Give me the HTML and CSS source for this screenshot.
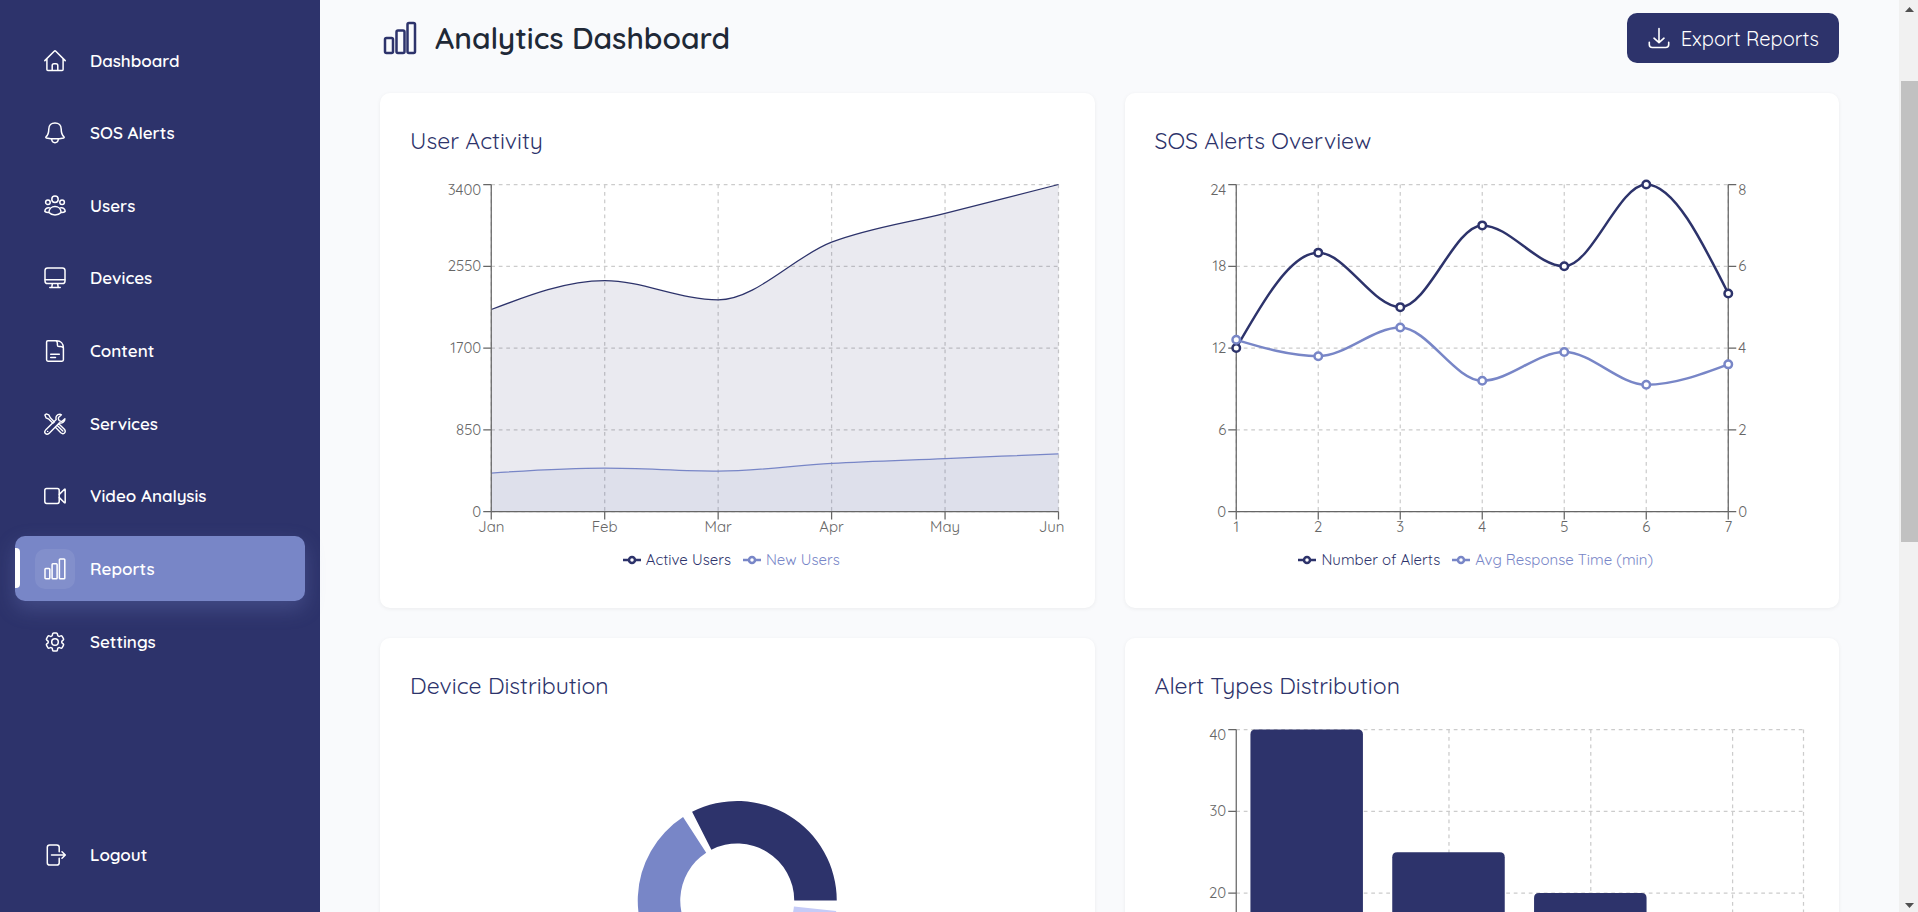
FILE: index.html
```html
<!DOCTYPE html>
<html lang="en">
<head>
<meta charset="utf-8">
<meta name="viewport" content="width=device-width, initial-scale=1">
<title>Analytics Dashboard</title>
<link rel="stylesheet" href="styles.css">
</head>
<body>
<div class="app">
  <aside class="sidebar">
    <nav class="nav" aria-label="Main">
      <a class="nav-item" href="#dashboard"><span class="nav-icon"><svg class="icon" viewBox="0 0 22 22"><path d="M.8 10.6 10.2 1.3q.8-.8 1.6 0l9.4 9.3M2.9 8.8v10.7q0 1 1 1h14.2q1 0 1-1V8.8M8.2 20.3v-4.8q0-1.8 1.8-1.8h2q1.8 0 1.8 1.8v4.8"/></svg></span>Dashboard</a>
      <a class="nav-item" href="#sos"><span class="nav-icon"><svg class="icon" viewBox="0 0 22 22"><path d="M11 .9c3.7 0 6.2 2.6 6.2 6 0 4 1 6.3 2.8 8 .4.5.2.9-.3 1-5.6 1.2-11.8 1.2-17.4 0-.5-.1-.7-.5-.3-1 1.800-1.700 2.800-4 2.800-8 0-3.400 2.500-6 6.200-6zM7.600 16.800c.2 2.300 1.600 3.900 3.400 3.900s3.200-1.600 3.400-3.900"/></svg></span>SOS Alerts</a>
      <a class="nav-item" href="#users"><span class="nav-icon"><svg class="icon" viewBox="0 0 22 22"><circle cx="11" cy="4.300" r="3.200"/><circle cx="3.900" cy="7.200" r="2.300"/><circle cx="18.100" cy="7.200" r="2.300"/><path d="M4.900 17.600c.1-3.600 2.600-6.200 6.100-6.200s6 2.600 6.100 6.200c-1.600 1.700-3.700 2.400-6.100 2.400s-4.500-.7-6.100-2.400zM5.700 12.900c-2.600-.7-4.700.7-4.900 3.500 1 .9 2.300 1.200 4 1.100M16.300 12.900c2.600-.7 4.700.7 4.900 3.500-1 .9-2.300 1.200-4 1.100"/></svg></span>Users</a>
      <a class="nav-item" href="#devices"><span class="nav-icon"><svg class="icon" viewBox="0 0 22 22"><rect x="1" y="1" width="20" height="15.500" rx="2.600"/><path d="M1.200 12.700h19.600M8.300 16.700l-.5 3.800M13.700 16.700l.5 3.800M5.800 20.600h10.400"/></svg></span>Devices</a>
      <a class="nav-item" href="#content"><span class="nav-icon"><svg class="icon" viewBox="0 0 22 22"><path d="M3.800.8h8.700c4.300 0 6.900 3 6.900 7.200v11.800q0 1.400-1.400 1.400H4q-1.400 0-1.400-1.400V2q0-1.200 1.200-1.200zM12 .9q1.500.8 1.400 2.800v1.200q0 1.600 1.600 1.600h1.500q2 0 2.800 1.500M6.700 14.300h8.600M6.700 17.500h4.800"/></svg></span>Content</a>
      <a class="nav-item" href="#services"><span class="nav-icon"><svg class="icon icon-fine" viewBox="0 0 22 22"><path d="M15.900 1.100c-3 .1-4.600 2.800-3.700 5.400L1.600 17.100c-2.300 2.700.8 5.400 3.400 3.300L15.500 9.800c2.700.9 5.500-1 5.400-4.100l-2.800 2.600q-1.700.3-2.900-.8-1.100-1.200-.7-2.900l2.900-2.800zM.9 2.100 2.200.9l2.600 1 1.500 2.900 4.100 4.100M.9 2.100 2 4.800l2.900 1.400 4.100 4.100M11.200 14l5.600 5.700c2.700 2.400 5.800-.7 3.600-3.500l-5.700-5.500M13.500 12.800l5.300 5.300M3.600 18.400h.1"/></svg></span>Services</a>
      <a class="nav-item" href="#video"><span class="nav-icon"><svg class="icon" viewBox="0 0 22 22"><rect x=".8" y="3.600" width="14.400" height="14.800" rx="1.800"/><path d="m15.300 9.400 5.200-5.100q.7-.5.700.4v12.600q0 .9-.7.400l-5.200-5.100"/></svg></span>Video Analysis</a>
      <a class="nav-item nav-item-active" href="#reports" aria-current="page"><span class="nav-icon"><svg class="icon" viewBox="0 0 22 22"><rect x="1" y="10.500" width="4.800" height="10.300" rx=".8"/><rect x="8.100" y="5.800" width="5" height="15" rx=".8"/><rect x="15.400" y="1" width="5.400" height="19.800" rx=".8"/></svg></span>Reports</a>
      <a class="nav-item" href="#settings"><span class="nav-icon"><svg class="icon" viewBox="1 1 22 22"><path d="M9.594 3.940c.09-.542.56-.94 1.110-.94h2.593c.55 0 1.020.398 1.110.94l.213 1.281c.063.374.313.686.645.87.074.04.147.083.22.127.325.196.72.257 1.075.124l1.217-.456a1.125 1.125 0 0 1 1.370.49l1.296 2.247a1.125 1.125 0 0 1-.26 1.431l-1.003.827c-.293.241-.438.613-.43.992a7.723 7.723 0 0 1 0 .255c-.008.378.137.75.43.991l1.004.827c.424.35.534.955.26 1.430l-1.298 2.247a1.125 1.125 0 0 1-1.369.491l-1.217-.456c-.355-.133-.75-.072-1.076.124a6.470 6.470 0 0 1-.22.128c-.331.183-.581.495-.644.869l-.213 1.281c-.09.543-.56.94-1.110.94h-2.594c-.55 0-1.019-.398-1.110-.94l-.213-1.281c-.062-.374-.312-.686-.644-.87a6.520 6.520 0 0 1-.22-.127c-.325-.196-.72-.257-1.076-.124l-1.217.456a1.125 1.125 0 0 1-1.369-.49l-1.297-2.247a1.125 1.125 0 0 1 .26-1.431l1.004-.827c.292-.24.437-.613.43-.991a6.932 6.932 0 0 1 0-.255c.007-.38-.138-.751-.43-.992l-1.004-.827a1.125 1.125 0 0 1-.26-1.430l1.297-2.247a1.125 1.125 0 0 1 1.370-.491l1.216.456c.356.133.751.072 1.076-.124.072-.044.146-.086.22-.128.332-.183.582-.495.644-.869l.214-1.280z"/><circle cx="12" cy="12" r="3.300"/></svg></span>Settings</a>
    </nav>
    <button class="nav-item logout" type="button"><span class="nav-icon"><svg class="icon" viewBox="0 0 22 22"><path d="M15.200 7.700V3.300q0-2.400-2.400-2.400H5.700q-2.400 0-2.400 2.400v15.400q0 2.400 2.400 2.400h7.100q2.400 0 2.400-2.400v-4.400M7.500 11h13.700M18 7.800l3.300 3.200-3.300 3.200"/></svg></span>Logout</button>
  </aside>

  <main class="main">
    <header class="page-header">
      <div class="page-title">
        <svg class="title-icon" viewBox="0 0 40 40"><rect x="5" y="20" width="8" height="15" rx="1.500"/><rect x="16.500" y="12.500" width="8" height="22.500" rx="1.500"/><rect x="27.500" y="5" width="7.500" height="30" rx="1.500"/></svg>
        <h1>Analytics Dashboard</h1>
      </div>
      <button class="export" type="button">
        <svg class="export-icon" viewBox="0 0 24 24"><path d="M12 2.500v14M7 12.200l5 4.500 5-4.500M2.300 16.200v2.300q0 3 3 3h13.400q3 0 3-3v-2.300"/></svg>
        Export Reports
      </button>
    </header>

    <div class="cards">
      <section class="card">
        <h2>User Activity</h2>
        <div class="chart">
          <svg class="plot" id="activity" role="img" aria-label="User activity by month"></svg>
          <ul class="legend">
            <li class="legend-item navy"><svg class="legend-mark" viewBox="0 0 18 10"><path d="M0 5h6M12 5h6"/><circle cx="9" cy="5" r="3"/></svg>Active Users</li>
            <li class="legend-item blue"><svg class="legend-mark" viewBox="0 0 18 10"><path d="M0 5h6M12 5h6"/><circle cx="9" cy="5" r="3"/></svg>New Users</li>
          </ul>
        </div>
      </section>
      <section class="card">
        <h2>SOS Alerts Overview</h2>
        <div class="chart">
          <svg class="plot" id="alerts" role="img" aria-label="SOS alerts and response time"></svg>
          <ul class="legend">
            <li class="legend-item navy"><svg class="legend-mark" viewBox="0 0 18 10"><path d="M0 5h6M12 5h6"/><circle cx="9" cy="5" r="3"/></svg>Number of Alerts</li>
            <li class="legend-item blue"><svg class="legend-mark" viewBox="0 0 18 10"><path d="M0 5h6M12 5h6"/><circle cx="9" cy="5" r="3"/></svg>Avg Response Time (min)</li>
          </ul>
        </div>
      </section>
      <section class="card">
        <h2>Device Distribution</h2>
        <div class="chart"><svg class="plot" id="devices-chart" role="img" aria-label="Device distribution"></svg></div>
      </section>
      <section class="card">
        <h2>Alert Types Distribution</h2>
        <div class="chart"><svg class="plot" id="types" role="img" aria-label="Alert types distribution"></svg></div>
      </section>
    </div>
  </main>

  <div class="scrollbar" aria-hidden="true">
    <svg class="scroll-arrow" viewBox="0 0 19 19"><path d="M6 12h9L10.500 7z"/></svg>
    <div class="scroll-track"><div class="scroll-thumb"></div></div>
    <svg class="scroll-arrow" viewBox="0 0 19 19"><path d="M6 10h9l-4.500 5z"/></svg>
  </div>
</div>
<script src="charts.js"></script>
</body>
</html>
```

FILE: styles.css
```css
* { box-sizing: border-box; }

body {
  margin: 0;
  font-family: "Quicksand", "Lato", sans-serif;
  background: #f9fafc;
  color: #1f2937;
}

.app {
  display: flex;
  height: 100vh;
  overflow: hidden;
}

/* Sidebar */
.sidebar {
  flex: 0 0 320px;
  display: flex;
  flex-direction: column;
  justify-content: space-between;
  padding: 28px 15px 25px;
  background: #2d336b;
}

.nav {
  display: flex;
  flex-direction: column;
  justify-content: space-between;
  min-height: 646px;
}

.nav-item {
  position: relative;
  display: flex;
  align-items: center;
  gap: 15px;
  width: 100%;
  height: 65px;
  padding: 0 20px;
  border: 0;
  border-radius: 10px;
  background: none;
  color: #fff;
  font-family: inherit;
  font-size: 17px;
  font-weight: 600;
  line-height: 24px;
  text-align: left;
  text-decoration: none;
  cursor: pointer;
}

.nav-icon {
  display: flex;
  align-items: center;
  justify-content: center;
  width: 40px;
  height: 40px;
  border-radius: 10px;
}

.icon {
  width: 22px;
  height: 22px;
  fill: none;
  stroke: currentColor;
  stroke-width: 1.5;
  stroke-linecap: round;
  stroke-linejoin: round;
}

.icon-fine { stroke-width: 1.4; }

.nav-item-active {
  background: #7886c7;
  box-shadow: 0 8px 20px rgba(120, 134, 199, 0.3);
}

.nav-item-active .nav-icon { background: rgba(255, 255, 255, 0.08); }

.nav-item-active::before {
  content: "";
  position: absolute;
  left: 0;
  top: 12px;
  width: 5px;
  height: 40px;
  border-radius: 0 4px 4px 0;
  background: #fff;
}

/* Page */
.main {
  flex: 1;
  min-width: 0;
  overflow: hidden;
  padding: 13px 60px 60px;
}

.page-header {
  display: flex;
  align-items: center;
  justify-content: space-between;
  margin-bottom: 30px;
}

.page-title {
  display: flex;
  align-items: center;
  gap: 15px;
}

.title-icon {
  width: 40px;
  height: 40px;
  fill: none;
  stroke: #2d336b;
  stroke-width: 2.5;
}

h1 {
  margin: 0;
  font-size: 30px;
  font-weight: 600;
  line-height: 40px;
}

.export {
  display: flex;
  align-items: center;
  gap: 10px;
  height: 50px;
  padding: 0 20px;
  border: 0;
  border-radius: 10px;
  background: #2d336b;
  color: #fff;
  font-family: inherit;
  font-size: 20px;
  font-weight: 400;
  cursor: pointer;
}

.export-icon {
  width: 24px;
  height: 24px;
  fill: none;
  stroke: currentColor;
  stroke-width: 1.6;
  stroke-linecap: round;
  stroke-linejoin: round;
}

.cards {
  display: grid;
  grid-template-columns: repeat(2, minmax(0, 1fr));
  gap: 30px;
}

.card {
  padding: 30px;
  border-radius: 10px;
  background: #fff;
  box-shadow: 0 1px 4px rgba(0, 0, 0, 0.06);
}

h2 {
  margin: 0 0 20px;
  color: #2d336b;
  font-size: 23px;
  font-weight: 400;
  line-height: 35px;
}

.chart { height: 400px; }

.plot {
  display: block;
  width: 100%;
  height: 370px;
  overflow: visible;
}

.legend {
  display: flex;
  justify-content: center;
  margin: 0;
  padding: 0;
  list-style: none;
}

.legend-item {
  display: flex;
  align-items: center;
  gap: 5px;
  margin-right: 12px;
  font-size: 15px;
  font-weight: 400;
  line-height: 24px;
}

.legend-mark {
  width: 18px;
  height: 10px;
  fill: none;
  stroke: currentColor;
  stroke-width: 2.5;
}

.navy { color: #2d336b; }
.blue { color: #7886c7; }

/* Chart marks */
.grid { stroke: #ccc; stroke-dasharray: 3.75 3.75; fill: none; stroke-width: 1.25; }
.axis { stroke: #666; fill: none; stroke-width: 1.25; }
.tick { fill: #666; font-size: 15px; font-weight: 400; }
.curve { fill: none; stroke: currentColor; stroke-width: 2.5; }
.curve-thin { stroke-width: 1.25; }
.area { fill: currentColor; fill-opacity: 0.1; }
.dot { fill: #fff; stroke: currentColor; stroke-width: 2.5; }
.bar { fill: #2d336b; }

/* Scrollbar */
.scrollbar {
  flex: 0 0 19px;
  display: flex;
  flex-direction: column;
  background: #f1f1f1;
}

.scroll-arrow {
  width: 19px;
  height: 19px;
  fill: #505050;
}

.scroll-track {
  flex: 1;
  padding: 62px 0 0 2px;
}

.scroll-thumb {
  height: 461px;
  background: #c1c1c1;
}
```

FILE: charts.js
```js
const TOP = 6.5;
const BOTTOM = 333.5;
const LEFT = 81.25;

function tag(name, attrs, text = "") {
  const list = Object.entries(attrs).map(([k, v]) => `${k}="${v}"`).join(" ");
  return `<${name} ${list}>${text}</${name}>`;
}

function scaleY(value, max) {
  return BOTTOM - (value / max) * (BOTTOM - TOP);
}

/* Monotone cubic curve through the points. */
function curve(points) {
  const n = points.length;
  const slope = [];
  for (let i = 0; i < n - 1; i++) {
    slope.push((points[i + 1][1] - points[i][1]) / (points[i + 1][0] - points[i][0]));
  }
  const t = new Array(n).fill(0);
  for (let i = 1; i < n - 1; i++) {
    const a = slope[i - 1];
    const b = slope[i];
    t[i] = (Math.sign(a) + Math.sign(b)) * Math.min(Math.abs(a), Math.abs(b), Math.abs(a + b) / 4);
  }
  t[0] = (3 * slope[0] - t[1]) / 2;
  t[n - 1] = (3 * slope[n - 2] - t[n - 2]) / 2;
  let d = `M${points[0]}`;
  for (let i = 0; i < n - 1; i++) {
    const [x0, y0] = points[i];
    const [x1, y1] = points[i + 1];
    const h = (x1 - x0) / 3;
    d += `C${x0 + h},${y0 + h * t[i]} ${x1 - h},${y1 - h * t[i + 1]} ${x1},${y1}`;
  }
  return d;
}

function gridLines(right, xs) {
  let d = "";
  for (let i = 0; i <= 4; i++) {
    const y = TOP + (i * (BOTTOM - TOP)) / 4;
    d += `M${LEFT} ${y}H${right}`;
  }
  for (const x of xs) d += `M${x} ${TOP}V${BOTTOM}`;
  return tag("path", { class: "grid", d });
}

function yAxis(x, labels, side) {
  let d = `M${x} ${TOP}V${BOTTOM}`;
  let out = "";
  labels.forEach((label, i) => {
    const y = BOTTOM - (i * (BOTTOM - TOP)) / (labels.length - 1);
    d += `M${x} ${y}h${side * 8}`;
    if (label === "") return;
    out += tag("text", {
      class: "tick",
      x: x + side * 10,
      y: y + (i === labels.length - 1 ? 10 : 5),
      "text-anchor": side < 0 ? "end" : "start"
    }, label);
  });
  return tag("path", { class: "axis", d }) + out;
}

function xAxis(right, xs, labels, width) {
  let d = `M${LEFT} ${BOTTOM}H${right}`;
  let out = "";
  xs.forEach((x, i) => {
    d += `M${x} ${BOTTOM}v8`;
    const clamp = x + 12 > width;
    out += tag("text", {
      class: "tick",
      x: clamp ? width : x,
      y: BOTTOM + 20,
      "text-anchor": clamp ? "end" : "middle"
    }, labels[i]);
  });
  return tag("path", { class: "axis", d }) + out;
}

function spread(right, count) {
  return Array.from({ length: count }, (_, i) => LEFT + (i * (right - LEFT)) / (count - 1));
}

function drawActivity() {
  const svg = document.getElementById("activity");
  const width = svg.getBoundingClientRect().width;
  const right = width - 6;
  const xs = spread(right, 6);
  const series = [
    ["navy", [2100, 2400, 2200, 2800, 3100, 3400]],
    ["blue", [400, 450, 420, 500, 550, 600]]
  ];
  let html = gridLines(right, xs);
  for (const [color, values] of series) {
    const d = curve(values.map((v, i) => [xs[i], scaleY(v, 3400)]));
    html += `<g class="${color}">` +
      tag("path", { class: "area", d: `${d}V${BOTTOM}H${LEFT}Z` }) +
      tag("path", { class: "curve curve-thin", d }) + "</g>";
  }
  html += yAxis(LEFT, [0, 850, 1700, 2550, 3400], -1);
  html += xAxis(right, xs, ["Jan", "Feb", "Mar", "Apr", "May", "Jun"], width);
  svg.innerHTML = html;
}

function drawAlerts() {
  const svg = document.getElementById("alerts");
  const width = svg.getBoundingClientRect().width;
  const right = width - LEFT;
  const xs = spread(right, 7);
  const series = [
    ["navy", 24, [12, 19, 15, 21, 18, 24, 16]],
    ["blue", 8, [4.2, 3.8, 4.5, 3.2, 3.9, 3.1, 3.6]]
  ];
  let html = gridLines(right, xs);
  html += yAxis(LEFT, [0, 6, 12, 18, 24], -1);
  html += yAxis(right, [0, 2, 4, 6, 8], 1);
  html += xAxis(right, xs, [1, 2, 3, 4, 5, 6, 7], width);
  for (const [color, max, values] of series) {
    const points = values.map((v, i) => [xs[i], scaleY(v, max)]);
    html += `<g class="${color}">` + tag("path", { class: "curve", d: curve(points) });
    for (const [cx, cy] of points) html += tag("circle", { class: "dot", cx, cy, r: 3.75 });
    html += "</g>";
  }
  svg.innerHTML = html;
}

function drawDevices() {
  const svg = document.getElementById("devices-chart");
  const cx = svg.getBoundingClientRect().width / 2;
  const cy = 177.5;
  const outer = 99.5;
  const inner = 57;
  const at = (r, deg) => {
    const a = (deg * Math.PI) / 180;
    return `${cx + r * Math.cos(a)} ${cy - r * Math.sin(a)}`;
  };
  const slices = [["#2d336b", 0, 117], ["#7886c7", 123, 232], ["#a9b5df", 238, 302], ["#c5cbf7", 308, 354]];
  svg.innerHTML = slices.map(([fill, from, to]) => tag("path", {
    fill,
    d: `M${at(outer, from)}A${outer} ${outer} 0 0 0 ${at(outer, to)}L${at(inner, to)}A${inner} ${inner} 0 0 1 ${at(inner, from)}Z`
  })).join("");
}

function drawTypes() {
  const svg = document.getElementById("types");
  const width = svg.getBoundingClientRect().width;
  const right = width - 6;
  const band = (right - LEFT) / 4;
  const xs = [0, 1, 2, 3].map((i) => LEFT + band * (i + 0.5));
  let html = gridLines(right, [...xs, right]);
  html += yAxis(LEFT, ["", "", 20, 30, 40], -1);
  [40, 25, 20, 15].forEach((v, i) => {
    const x = LEFT + band * (i + 0.1);
    const w = Math.floor(band * 0.8) - 0.5;
    const y = scaleY(v, 40);
    html += tag("path", {
      class: "bar",
      d: `M${x} ${BOTTOM}V${y + 5}q0-5 5-5h${w - 10}q5 0 5 5V${BOTTOM}Z`
    });
  });
  svg.innerHTML = html;
}

function drawAll() {
  drawActivity();
  drawAlerts();
  drawDevices();
  drawTypes();
}

drawAll();
window.addEventListener("resize", drawAll);
```
